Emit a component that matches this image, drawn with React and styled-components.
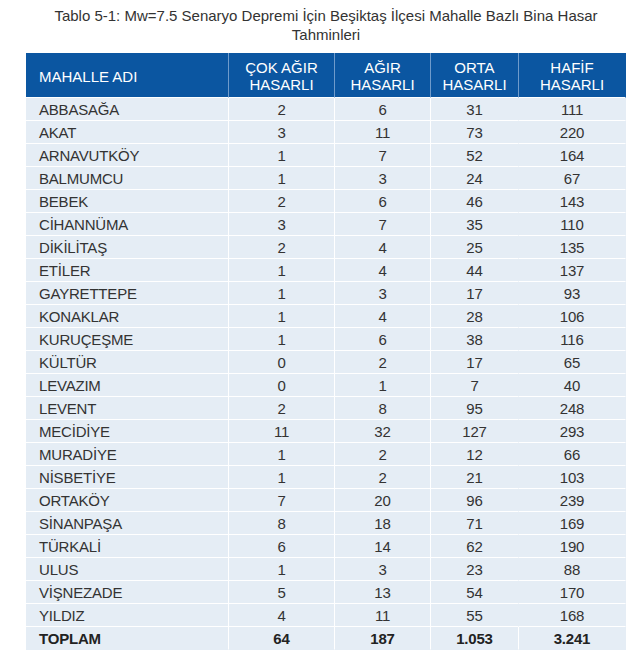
import styled, { createGlobalStyle } from "styled-components";

const GlobalStyle = createGlobalStyle`
  body {
    margin: 0;
    background: #ffffff;
    font-family: "Liberation Sans", Arial, sans-serif;
    color: #333333;
  }
`;

const rows = [
  ["ABBASAĞA", "2", "6", "31", "111"],
  ["AKAT", "3", "11", "73", "220"],
  ["ARNAVUTKÖY", "1", "7", "52", "164"],
  ["BALMUMCU", "1", "3", "24", "67"],
  ["BEBEK", "2", "6", "46", "143"],
  ["CİHANNÜMA", "3", "7", "35", "110"],
  ["DİKİLİTAŞ", "2", "4", "25", "135"],
  ["ETİLER", "1", "4", "44", "137"],
  ["GAYRETTEPE", "1", "3", "17", "93"],
  ["KONAKLAR", "1", "4", "28", "106"],
  ["KURUÇEŞME", "1", "6", "38", "116"],
  ["KÜLTÜR", "0", "2", "17", "65"],
  ["LEVAZIM", "0", "1", "7", "40"],
  ["LEVENT", "2", "8", "95", "248"],
  ["MECİDİYE", "11", "32", "127", "293"],
  ["MURADİYE", "1", "2", "12", "66"],
  ["NİSBETİYE", "1", "2", "21", "103"],
  ["ORTAKÖY", "7", "20", "96", "239"],
  ["SİNANPAŞA", "8", "18", "71", "169"],
  ["TÜRKALİ", "6", "14", "62", "190"],
  ["ULUS", "1", "3", "23", "88"],
  ["VİŞNEZADE", "5", "13", "54", "170"],
  ["YILDIZ", "4", "11", "55", "168"],
];

const total = ["TOPLAM", "64", "187", "1.053", "3.241"];

const widths = [203, 106, 96, 88, 107];

const Page = styled.div`
  padding: 6px 14px 0 26px;
  width: 600px;
`;

const Title = styled.h1`
  margin: 0 0 9px;
  font-size: 15px;
  font-weight: normal;
  line-height: 19px;
  text-align: center;
  color: #333333;
`;

const Table = styled.table`
  width: 600px;
  table-layout: fixed;
  border-collapse: separate;
  border-spacing: 0;
  background: #e5edf5;
`;

const HeadCell = styled.th`
  box-sizing: border-box;
  height: 45px;
  padding: 2px 0 0 ${(p) => (p.$left ? "13px" : "0")};
  background: #0b56a1;
  color: #ffffff;
  font-size: 15px;
  font-weight: normal;
  line-height: 17px;
  text-align: ${(p) => (p.$left ? "left" : "center")};
  border-right: 1px solid ${(p) => (p.$divider ? "#6f9bcb" : "transparent")};
  border-bottom: 1px solid #ffffff;
`;

const Cell = styled.td`
  box-sizing: border-box;
  height: 23px;
  padding: 2px 0 0 ${(p) => (p.$left ? "13px" : "0")};
  font-size: 15px;
  font-weight: ${(p) => (p.$bold ? "bold" : "normal")};
  line-height: 20px;
  text-align: ${(p) => (p.$left ? "left" : "center")};
  color: ${(p) => (p.$bold ? "#222222" : "#333333")};
  border-right: 1px solid ${(p) => (p.$divider ? "#ffffff" : "transparent")};
  border-bottom: 1px solid ${(p) => (p.$last ? "transparent" : "#ffffff")};
  white-space: nowrap;
  letter-spacing: -0.2px;
`;

function App() {
  return (
    <>
      <GlobalStyle />
      <Page>
        <Title>
          Tablo 5-1: Mw=7.5 Senaryo Depremi İçin Beşiktaş İlçesi Mahalle Bazlı Bina Hasar
          <br />
          Tahminleri
        </Title>
        <Table>
          <colgroup>
            {widths.map((w, i) => (
              <col key={i} style={{ width: w }} />
            ))}
          </colgroup>
          <thead>
            <tr>
              <HeadCell $left $divider>MAHALLE ADI</HeadCell>
              <HeadCell $divider>ÇOK AĞIR<br />HASARLI</HeadCell>
              <HeadCell $divider>AĞIR<br />HASARLI</HeadCell>
              <HeadCell $divider>ORTA<br />HASARLI</HeadCell>
              <HeadCell>HAFİF<br />HASARLI</HeadCell>
            </tr>
          </thead>
          <tbody>
            {rows.map((r) => (
              <tr key={r[0]}>
                {r.map((v, i) => (
                  <Cell key={i} $left={i === 0} $divider={i < 3}>
                    {v}
                  </Cell>
                ))}
              </tr>
            ))}
            <tr>
              {total.map((v, i) => (
                <Cell key={i} $left={i === 0} $divider={i < 4} $bold $last>
                  {v}
                </Cell>
              ))}
            </tr>
          </tbody>
        </Table>
      </Page>
    </>
  );
}

export default App;
